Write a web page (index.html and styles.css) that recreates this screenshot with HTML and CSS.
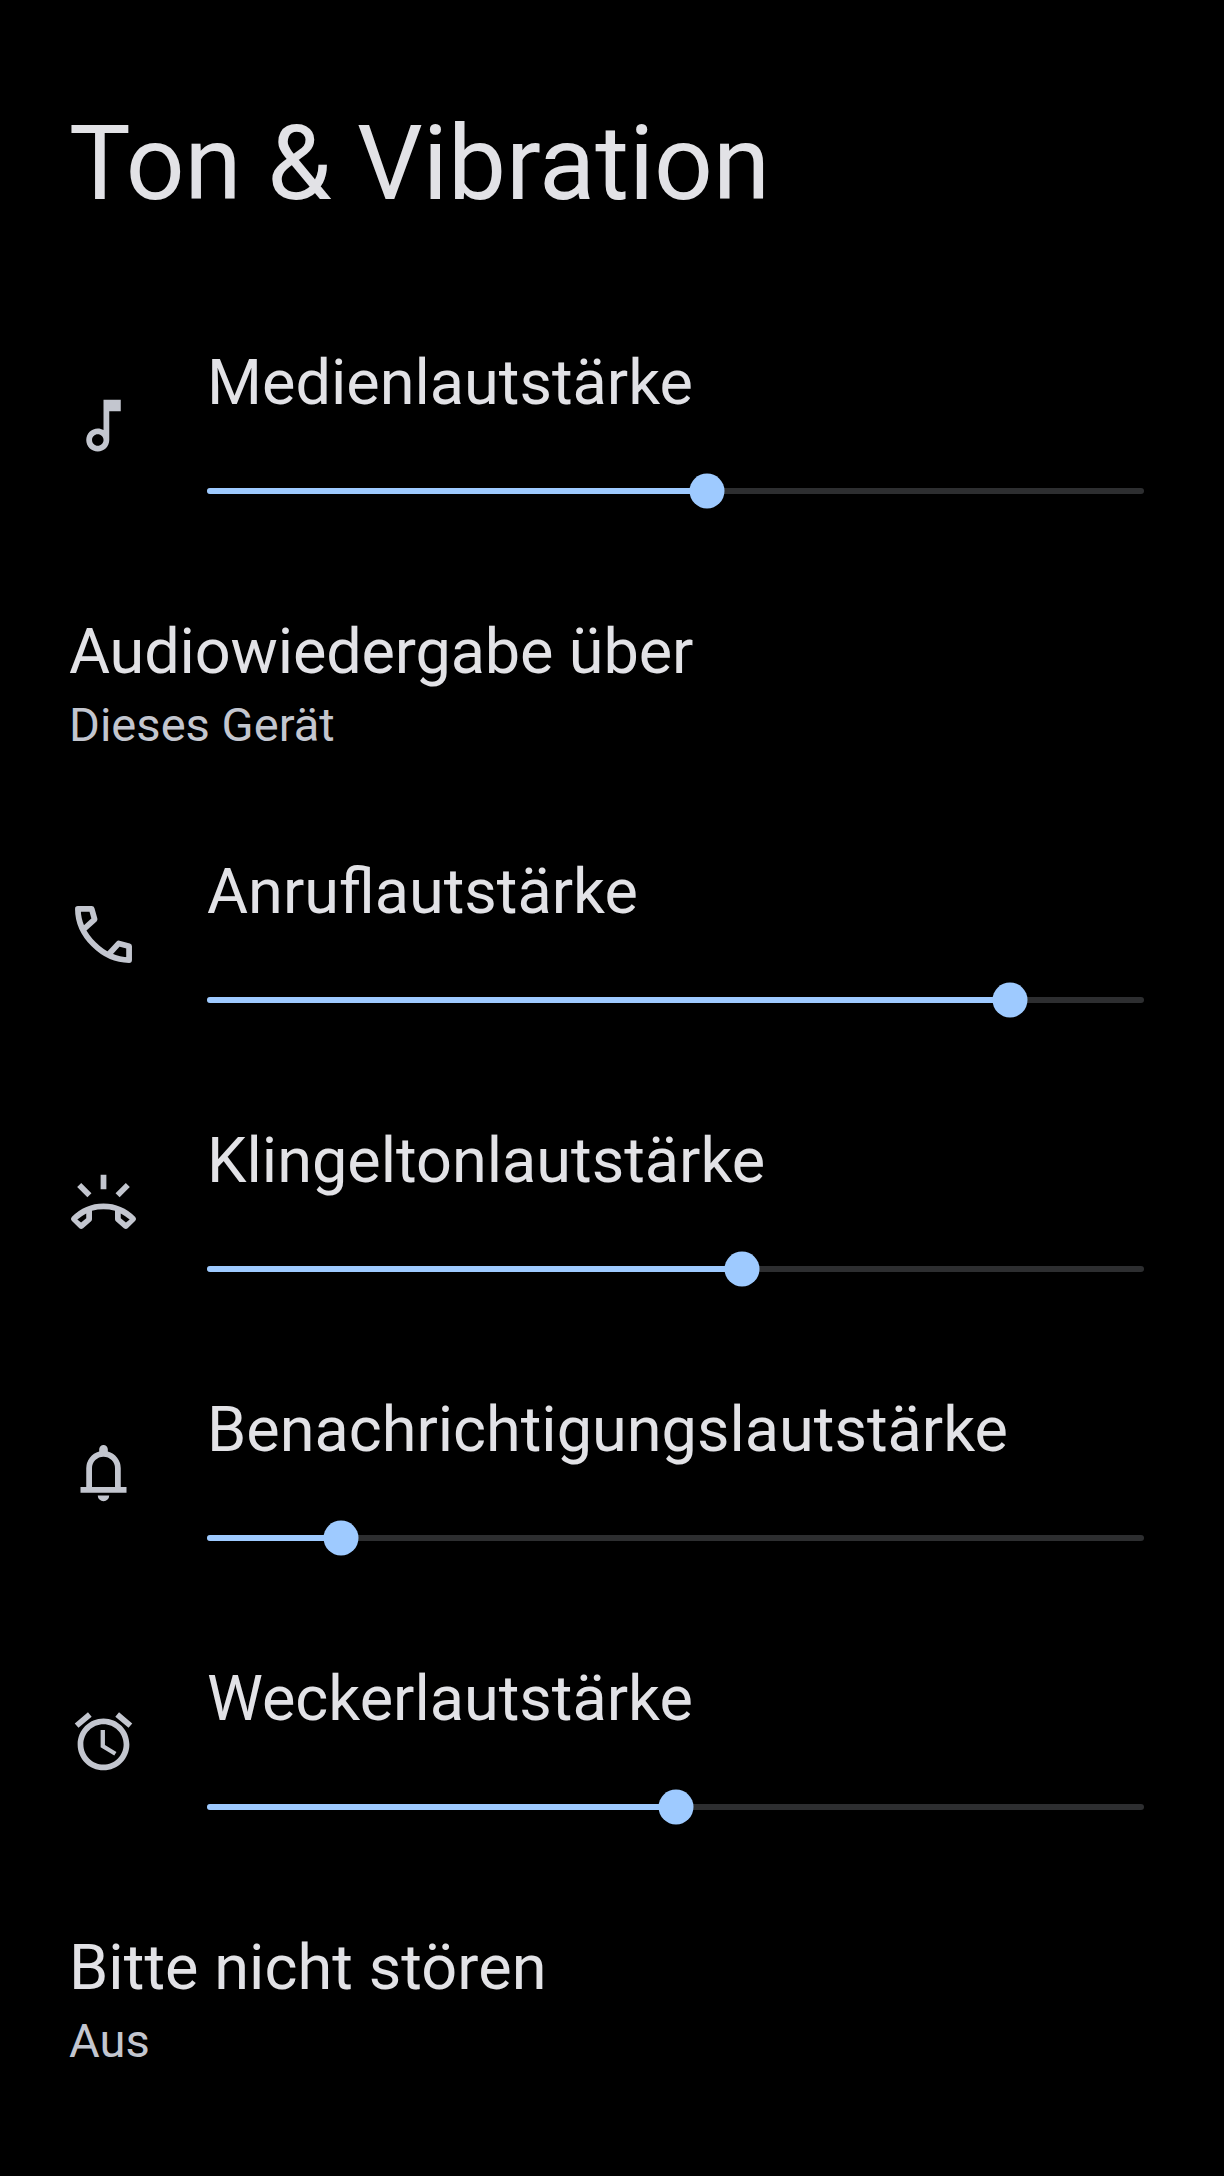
FILE: index.html
```html
<!DOCTYPE html>
<html lang="de">
<head>
<meta charset="utf-8">
<title>Ton &amp; Vibration</title>
<link rel="stylesheet" href="styles.css">
</head>
<body>
<main class="screen">
  <h1 class="title">Ton &amp; Vibration</h1>
  <section class="volume">
    <svg class="icon" viewBox="0 0 24 24"><path d="M12 3l.01 10.55c-.59-.34-1.27-.55-2-.55C7.79 13 6 14.79 6 17s1.79 4 4.01 4S14 19.21 14 17V7h4V3h-6zm-1.99 16c-1.1 0-2-.9-2-2s.9-2 2-2 2 .9 2 2-.9 2-2 2z"/></svg>
    <div class="control"><h2 class="label">Medienlautstärke</h2><div class="slider" style="--value:500px"><span class="fill"></span><span class="thumb"></span></div></div>
  </section>
  <section class="entry"><h2 class="label label-tight">Audiowiedergabe über</h2><p class="summary">Dieses Gerät</p></section>
  <section class="volume">
    <svg class="icon icon-line" viewBox="0 0 24 24"><path d="M5.3 10 8.9 6.7 7.9 3.1H3.1C3.1 12.2 11.8 20.9 20.9 20.9V16.1L17.3 15.1 14 18.7"/></svg>
    <div class="control"><h2 class="label">Anruflautstärke</h2><div class="slider" style="--value:803px"><span class="fill"></span><span class="thumb"></span></div></div>
  </section>
  <section class="volume">
    <svg class="icon" viewBox="0 0 24 24"><path fill-rule="evenodd" d="M3.6 20.6.95 18q-.6-.6 0-1.3Q5.6 12 12 12t11.05 4.7q.6.7 0 1.3L20.4 20.6q-.6.5-1.3 0L16.4 18.3q-.4-.3-.4-.8v-3Q14 14 12 14t-4 .5v3q0 .5-.4.8L4.9 20.6q-.7.5-1.3 0zM6 15.5q-1.5.8-3.1 2.1L4.2 18.6 6 17.1zM18 15.5v1.6l1.8 1.5 1.3-1Q19.5 16.3 18 15.5z"/><path d="M21.16 6.26l-1.41-1.41-3.56 3.55 1.41 1.41 3.56-3.55zM13 2h-2v5h2V2zM6.4 9.81L7.81 8.4 4.26 4.84 2.84 6.26 6.4 9.81z"/></svg>
    <div class="control"><h2 class="label">Klingeltonlautstärke</h2><div class="slider" style="--value:535px"><span class="fill"></span><span class="thumb"></span></div></div>
  </section>
  <section class="volume">
    <svg class="icon" viewBox="0 0 24 24"><path d="M4 19v-2h2v-6.5a6 6 0 0 1 4.5-5.8v-.8a1.5 1.5 0 0 1 3 0v.8a6 6 0 0 1 4.5 5.8V17h2v2zM8 17h8v-6.5a4 4 0 0 0-8 0zM10 20h4a2 2 0 0 1-4 0z" fill-rule="evenodd"/></svg>
    <div class="control"><h2 class="label">Benachrichtigungslautstärke</h2><div class="slider" style="--value:134px"><span class="fill"></span><span class="thumb"></span></div></div>
  </section>
  <section class="volume">
    <svg class="icon" viewBox="0 0 24 24"><path d="M22 5.72l-4.6-3.86-1.29 1.53 4.6 3.86L22 5.72zM7.88 3.39L6.6 1.86 2 5.71l1.29 1.53 4.59-3.85zM12.5 8H11v6l4.75 2.85.75-1.23-4-2.37V8zM12 4c-4.97 0-9 4.03-9 9s4.02 9 9 9c4.97 0 9-4.03 9-9s-4.03-9-9-9zm0 16c-3.87 0-7-3.13-7-7s3.13-7 7-7 7 3.13 7 7-3.13 7-7 7z"/></svg>
    <div class="control"><h2 class="label">Weckerlautstärke</h2><div class="slider" style="--value:469px"><span class="fill"></span><span class="thumb"></span></div></div>
  </section>
  <section class="entry"><h2 class="label label-loose">Bitte nicht stören</h2><p class="summary">Aus</p></section>
</main>
</body>
</html>
```
FILE: styles.css
```css
body {
  margin: 0;
  background: #000;
  color: #e2e2e6;
  font-family: Roboto, sans-serif;
}
.screen {
  box-sizing: border-box;
  height: 2176px;
  padding: 104px 80px 0 69px;
  overflow: hidden;
}
.title {
  height: 120px;
  margin: 0 0 96px;
  font-size: 103.3px;
  font-weight: 400;
  line-height: 120px;
  white-space: nowrap;
}
.volume {
  display: flex;
  height: 269px;
}
.icon {
  flex: none;
  width: 69px;
  height: 69px;
  margin-top: 71px;
  fill: #c3c6cf;
}
.icon-line {
  fill: none;
  stroke: #c3c6cf;
  stroke-width: 2;
  stroke-linejoin: round;
}
.control {
  width: 937px;
  margin-left: 69px;
  padding-top: 26px;
}
.label {
  margin: 0;
  font-size: 63px;
  font-weight: 400;
  line-height: 74px;
  white-space: nowrap;
}
.label-tight {
  letter-spacing: -0.14px;
}
.label-loose {
  letter-spacing: 0.07px;
}
.slider {
  position: relative;
  height: 6px;
  margin-top: 68px;
  border-radius: 3px;
  background: #2d2e30;
}
.fill {
  display: block;
  width: var(--value);
  height: 6px;
  border-radius: 3px;
  background: #9ecaff;
}
.thumb {
  position: absolute;
  top: -15px;
  left: calc(var(--value) - 18px);
  width: 35px;
  height: 35px;
  border-radius: 50%;
  background: #9ecaff;
  transform: translate(0.5px, 0.5px);
}
.entry {
  box-sizing: border-box;
  height: 240px;
  padding-top: 26px;
}
.summary {
  margin: 7px 0 0;
  color: #c3c6cf;
  font-size: 47.1px;
  line-height: 57px;
}
```
